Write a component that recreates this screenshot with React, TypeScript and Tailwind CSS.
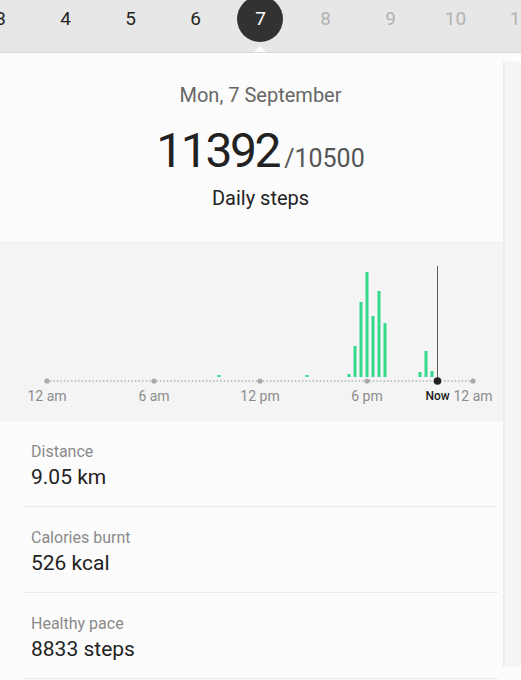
import React from 'react';

const days = [
  { n: 3, past: true },
  { n: 4, past: true },
  { n: 5, past: true },
  { n: 6, past: true },
  { n: 7, past: true, active: true },
  { n: 8, past: false },
  { n: 9, past: false },
  { n: 10, past: false },
  { n: 11, past: false },
];

// [x, top] in chart coords, bars sit on y=136
const bars: [number, number][] = [
  [219, 134],
  [307, 134],
  [349, 133],
  [355, 105],
  [361, 61],
  [367, 31],
  [373, 75],
  [379, 50],
  [385, 82],
  [420, 131],
  [426, 110],
  [432, 130],
];

const ticks = [
  { x: 47, label: '12 am' },
  { x: 154, label: '6 am' },
  { x: 260, label: '12 pm' },
  { x: 367, label: '6 pm' },
  { x: 473, label: '12 am' },
];

const stats = [
  { label: 'Distance', value: '9.05 km' },
  { label: 'Calories burnt', value: '526 kcal' },
  { label: 'Healthy pace', value: '8833 steps' },
];

function DayStrip() {
  return (
    <div className="relative h-[53px] bg-[#e7e7e7] border-b border-[#d9d9d9] overflow-hidden">
      <div className="flex -ml-[32px] h-[38px]">
        {days.map((d) => (
          <div key={d.n} className="relative w-[65px] shrink-0 flex items-center justify-center">
            {d.active && <div className="absolute left-[9px] -top-[4px] w-[46px] h-[46px] rounded-full bg-[#323232]" />}
            <span
              className={
                'relative text-[19px] ' +
                (d.active ? 'text-white' : d.past ? 'text-[#252525]' : 'text-[#b3b3b3]')
              }
            >
              {d.n}
            </span>
          </div>
        ))}
      </div>
      <div className="absolute left-[254px] bottom-0 w-0 h-0 border-l-[6px] border-r-[6px] border-b-[6px] border-l-transparent border-r-transparent border-b-[#fcfcfc]" />
    </div>
  );
}

function StepsChart() {
  const dots = [];
  for (let i = 0; i <= 120; i++) {
    dots.push(<circle key={i} cx={47 + i * 3.55} cy={140} r={0.9} fill="#bdbdbd" />);
  }
  return (
    <div className="h-[180px] bg-[#f4f4f4]">
      <svg width="503" height="180" viewBox="0 0 503 180">
        {dots}
        {bars.map(([x, top]) => (
          <rect key={x} x={x - 1.5} y={top} width={3} height={136 - top} fill="#33da8b" />
        ))}
        {ticks.map((t) => (
          <circle key={t.x} cx={t.x} cy={140} r={2.6} fill="#a9a9a9" />
        ))}
        <line x1={437.5} y1={25} x2={437.5} y2={140} stroke="#5a5a5a" strokeWidth={1} />
        <circle cx={437.5} cy={140} r={3.8} fill="#222" />
        {ticks.map((t, i) => (
          <text
            key={i}
            x={t.x}
            y={160}
            textAnchor="middle"
            fontSize="14"
            fill="#8c8c8c"
            fontFamily="Roboto, 'Liberation Sans', sans-serif"
          >
            {t.label}
          </text>
        ))}
        <text
          x={437.5}
          y={159}
          textAnchor="middle"
          fontSize="12"
          fontWeight="500"
          fill="#222"
          fontFamily="Roboto, 'Liberation Sans', sans-serif"
        >
          Now
        </text>
      </svg>
    </div>
  );
}

export default function App() {
  return (
    <div className="w-[521px] h-[680px] overflow-hidden bg-[#fcfcfc] font-['Roboto','Liberation_Sans',sans-serif]">
      <DayStrip />
      <div className="flex">
        <div className="w-[503px] shrink-0">
          <div className="pl-[18px] pt-[30px] pb-[31px] flex flex-col items-center">
            <div className="text-[20px] leading-[24px] text-[#666]">Mon, 7 September</div>
            <div className="mt-[16px] h-[56px] flex items-baseline">
              <span className="text-[48px] leading-[56px] tracking-[-0.05em] text-[#222]">11392</span>
              <span className="ml-[5px] text-[25px] text-[#555]">/10500</span>
            </div>
            <div className="mt-[7px] text-[20px] leading-[24px] text-[#222]">Daily steps</div>
          </div>
          <StepsChart />
          <div className="ml-[23px] mr-[5px]">
            {stats.map((s) => (
              <div key={s.label} className="pl-[8px] pt-[21px] pb-[16px] border-b border-[#ebebeb]">
                <div className="text-[16px] leading-[20px] text-[#8a8a8a]">{s.label}</div>
                <div className="mt-[2px] text-[21px] leading-[26px] text-[#222]">{s.value}</div>
              </div>
            ))}
          </div>
        </div>
        <div className="flex-1 pt-[9px] pb-[13px] flex">
          <div className="flex-1 h-[605px] bg-[#f5f5f5] border-l-2 border-[#ececec]" />
        </div>
      </div>
    </div>
  );
}
